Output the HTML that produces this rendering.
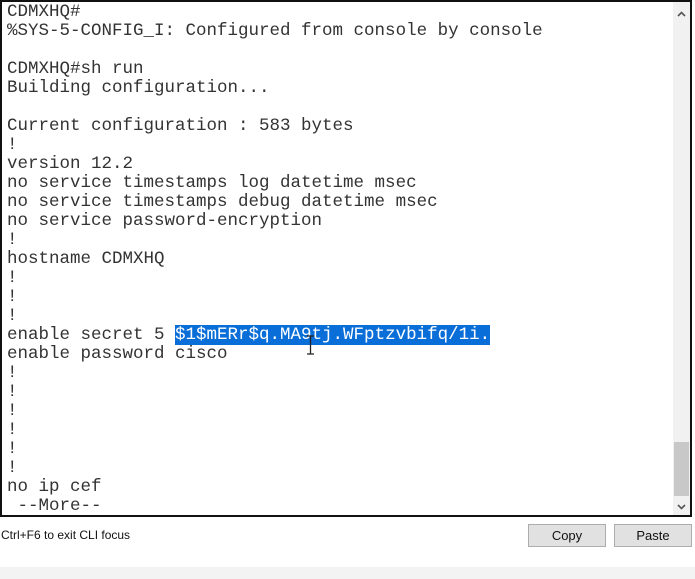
<!DOCTYPE html>
<html><head><meta charset="utf-8"><style>
html,body{margin:0;padding:0;background:#fff;width:695px;height:579px;overflow:hidden;position:relative}
#term{position:absolute;left:0;top:0;width:688px;height:513px;border:2px solid #111;background:#fff;overflow:hidden}
pre{margin:0;position:absolute;left:5px;top:1px;font-family:"Liberation Mono",monospace;font-size:17.5px;line-height:19px;color:#333}
.sel{background:#0a6ed8;color:#fff}
#sb{position:absolute;left:671px;top:0;width:17px;height:513px;background:#f1f1f1}
#thumb{position:absolute;left:1px;top:440px;width:15px;height:54px;background:#c8c8c8}
.arr{position:absolute;left:4px;width:9px;height:6px}
#ctrl{position:absolute;left:1px;top:528px;font:12px "Liberation Sans",sans-serif;color:#111}
.btn{position:absolute;top:524px;height:21px;background:#e1e1e1;border:1px solid #adadad;font:13px "Liberation Sans",sans-serif;text-align:center;line-height:21px;color:#111}
#foot{position:absolute;left:0;top:567px;width:695px;height:12px;background:#f3f3f3}
#cur{position:absolute;left:305px;top:333px;width:7px;height:20px}
</style></head><body>
<div id="term">
<pre>CDMXHQ#
%SYS-5-CONFIG_I: Configured from console by console

CDMXHQ#sh run
Building configuration...

Current configuration : 583 bytes
!
version 12.2
no service timestamps log datetime msec
no service timestamps debug datetime msec
no service password-encryption
!
hostname CDMXHQ
!
!
!
enable secret 5 <span class="sel">$1$mERr$q.MA9tj.WFptzvbifq/1i.</span>
enable password cisco
!
!
!
!
!
!
no ip cef
 --More--</pre>
<div id="sb"><svg class="arr" style="top:9px" viewBox="0 0 9 6"><path d="M1 5L4.5 1.5L8 5" stroke="#555" stroke-width="1.6" fill="none"/></svg><div id="thumb"></div><svg class="arr" style="top:502px" viewBox="0 0 9 6"><path d="M1 1L4.5 4.5L8 1" stroke="#555" stroke-width="1.6" fill="none"/></svg></div>
<svg id="cur" viewBox="0 0 7 20"><path d="M0 1h7M3.5 1v18M0 19h7" stroke="#222" stroke-width="1.3" fill="none"/></svg>
</div>
<div id="ctrl">Ctrl+F6 to exit CLI focus</div>
<div class="btn" style="left:528px;width:76px">Copy</div>
<div class="btn" style="left:614px;width:76px">Paste</div>
<div id="foot"></div>
</body></html>
